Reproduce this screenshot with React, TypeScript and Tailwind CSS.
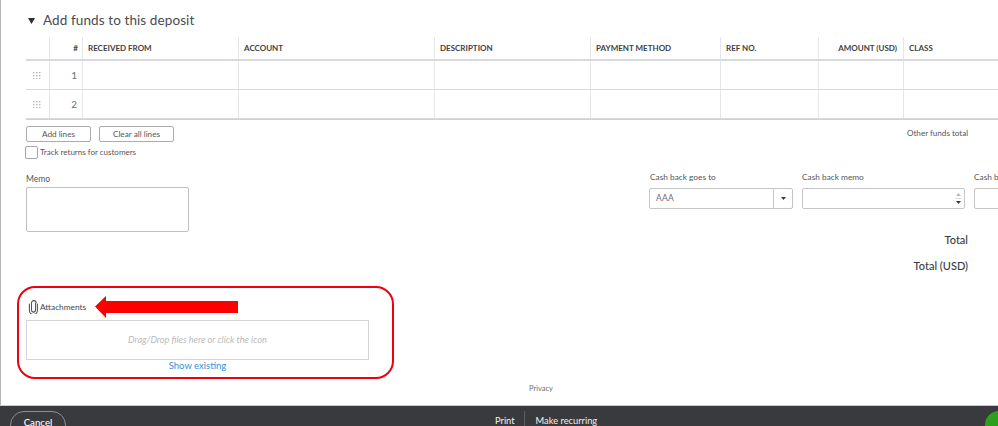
const columns = [
  { label: '', cls: '' },
  { label: '#', cls: 'justify-end pr-[4px]' },
  { label: 'RECEIVED FROM', cls: 'pl-[5px]' },
  { label: 'ACCOUNT', cls: 'pl-[5px]' },
  { label: 'DESCRIPTION', cls: 'pl-[5px]' },
  { label: 'PAYMENT METHOD', cls: 'pl-[5px]' },
  { label: 'REF NO.', cls: 'pl-[5px]' },
  { label: 'AMOUNT (USD)', cls: 'justify-end pr-[6px]' },
  { label: 'CLASS', cls: 'pl-[5px]' },
];

const gridCols = 'grid grid-cols-[24px_33px_156px_196px_156px_130px_98px_85px_95px]';

function DragHandle() {
  return (
    <svg width="8" height="7" viewBox="0 0 8 7" className="text-[#b4b7bb]">
      {[0, 3, 6].map((x) =>
        [0, 3, 6].map((y) => <rect key={`${x}-${y}`} x={x} y={y} width="1.4" height="1.4" fill="currentColor" />),
      )}
    </svg>
  );
}

function Row({ n }: { n: number }) {
  return (
    <div className={`${gridCols} h-[29px] border-b border-[#d9dadc]`}>
      {columns.map((col, i) => (
        <div key={i} className="flex items-center border-r border-[#e6e7e9] last:border-r-0">
          {i === 0 && (
            <span className="pl-[7px] flex">
              <DragHandle />
            </span>
          )}
          {i === 1 && <span className="w-full pr-[5px] text-right text-[10px] text-[#6b6c72]">{n}</span>}
        </div>
      ))}
    </div>
  );
}

function PaperClip() {
  return (
    <svg width="11" height="14" viewBox="0 0 11 14" fill="none" stroke="#55565b" strokeWidth="1.1" strokeLinecap="round" className="ml-[2px]">
      <path d="M7.5 3.5v6.6a2 2 0 0 1-4 0V3a2.3 2.3 0 0 1 4.6-.1" />
      <path d="M1.4 4v6.5a4 4 0 0 0 8 0V4" />
    </svg>
  );
}

export default function App() {
  return (
    <div className="w-[998px] h-[426px] overflow-hidden flex flex-col bg-white text-[#393a3d] font-['Lato','Liberation_Sans',sans-serif]">
      <main className="relative h-[405px] shrink-0 border-l border-[#b5b5b5] pl-[25px]">
        <div className="h-[37px] flex items-center pt-[3px]">
          <svg width="7" height="7" viewBox="0 0 7 7" className="ml-[2px] mr-[8px]">
            <path d="M0 1h7L3.5 7z" fill="#2f3033" />
          </svg>
          <h2 className="text-[13.5px] tracking-[0.1px] text-[#4a4b50]">Add funds to this deposit</h2>
        </div>

        <div className="w-[973px]">
          <div className={`${gridCols} h-[24px] border-b-2 border-[#d9dadf]`}>
            {columns.map((col, i) => (
              <div
                key={i}
                className={`flex items-center border-r border-[#e6e7e9] last:border-r-0 text-[8px] font-bold text-[#3f4045] whitespace-nowrap ${col.cls}`}
              >
                {col.label}
              </div>
            ))}
          </div>
          <Row n={1} />
          <div className="border-b border-[#cfd0d2]">
            <Row n={2} />
          </div>
        </div>

        <div className="mt-[6px] flex items-start">
          <button className="w-[65px] h-[16px] border border-[#a9abae] rounded-[2px] text-[8.2px] text-[#55565b] leading-none">
            Add lines
          </button>
          <button className="ml-[8px] w-[75px] h-[16px] border border-[#a9abae] rounded-[2px] text-[8.2px] text-[#55565b] leading-none">
            Clear all lines
          </button>
          <span className="ml-[733px] text-[8.1px] leading-[14px] text-[#55565b] whitespace-nowrap">Other funds total</span>
        </div>

        <label className="mt-[4px] -ml-[1px] flex items-center h-[13px]">
          <span className="w-[13px] h-[13px] border border-[#a5a7aa] rounded-[2px]" />
          <span className="ml-[2px] text-[8px] -mt-[1px] text-[#55565b]">Track returns for customers</span>
        </label>

        <div className="flex mt-[12px]">
          <div className="w-[623px] shrink-0">
            <div className="text-[8.5px] leading-[14px] mt-[1px] text-[#55565b]">Memo</div>
            <div className="mt-[1px] w-[163px] h-[45px] border border-[#bfc0c3] rounded-[2px]" />
          </div>
          <div className="flex-1 overflow-hidden -mt-[1px]">
            <div className="flex text-[8.3px] leading-[14px] text-[#55565b] whitespace-nowrap">
              <span className="w-[153px] pl-[1px] shrink-0">Cash back goes to</span>
              <span className="w-[172px] shrink-0">Cash back memo</span>
              <span>Cash back</span>
            </div>
            <div className="flex mt-[4px]">
              <div className="w-[144px] shrink-0 h-[21px] border border-[#c4c5c8] rounded-[2px] flex items-center">
                <span className="flex-1 pl-[6px] text-[8.5px] tracking-[0.3px] text-[#6b6c72]">AAA</span>
                <span className="w-[19px] h-full border-l border-[#c4c5c8] flex items-center justify-center">
                  <svg width="5" height="3" viewBox="0 0 5 3">
                    <path d="M0 0h5L2.5 3z" fill="#393a3d" />
                  </svg>
                </span>
              </div>
              <div className="ml-[9px] w-[163px] shrink-0 h-[21px] border border-[#c4c5c8] rounded-[2px] flex items-center justify-end pr-[2px]">
                <svg width="7" height="15" viewBox="0 0 7 15">
                  <path d="M1 5l2.5-3L6 5z" fill="#b8b9bc" />
                  <path d="M0 7.5h7" stroke="#dcdddf" />
                  <path d="M1 10h5l-2.5 3z" fill="#393a3d" />
                </svg>
              </div>
              <div className="ml-[9px] w-[40px] shrink-0 h-[21px] border border-[#c4c5c8] rounded-[2px]" />
            </div>
            <div className="mt-[23px] w-[319px] flex flex-col items-end text-[11px] font-medium text-[#393a3d]">
              <span className="leading-[16px]">Total</span>
              <span className="leading-[16px] mt-[10px]">Total (USD)</span>
            </div>
          </div>
        </div>

        <section className="mt-[12px] -ml-[9px] w-[377px] h-[93px] border-[2.5px] border-[#f0000f] rounded-[18px] pl-[7px] pt-[11px]">
          <div className="flex items-center h-[16px]">
            <PaperClip />
            <span className="ml-[1px] text-[8.3px] text-[#45464b]">Attachments</span>
          </div>
          <div className="mt-[5px] w-[343px] h-[40px] border border-[#d4d5d7] flex items-center justify-center italic text-[9.2px] text-[#b9babd]">
            Drag/Drop files here or click the icon
          </div>
          <div className="w-[343px] text-center text-[9.5px] leading-[12px] text-[#2f93d6]">Show existing</div>
        </section>

        <div className="mt-[4px] w-[1030px] text-center text-[7.5px] text-[#6b6c72]">Privacy</div>

        <svg width="145" height="23" viewBox="0 0 145 23" className="absolute left-[93px] top-[295px]">
          <path d="M1 11.5L12 1v5h132v12H12v5z" fill="#ff0000" />
        </svg>
      </main>

      <footer className="relative flex-1 bg-[#393a3d] border-t border-[#c9cacc] text-white">
        <div className="flex items-start h-full pl-[10px] pt-[5px]">
          <button className="w-[56px] h-[28px] shrink-0 border border-[#8d8e91] rounded-[14px] pb-[6px] text-[9.7px] font-medium text-white">
            Cancel
          </button>
          <div className="ml-[429px] flex items-start text-[9.3px] text-[#f2f2f2] whitespace-nowrap">
            <span className="mt-[3px]">Print</span>
            <span className="ml-[9px] w-px h-[20px] bg-[#5c5d61]" />
            <span className="ml-[11px] mt-[3px]">Make recurring</span>
          </div>
        </div>
        <span className="absolute left-[985px] top-[5px] w-[28px] h-[28px] rounded-full bg-[#2ca01c]" />
      </footer>
    </div>
  );
}
